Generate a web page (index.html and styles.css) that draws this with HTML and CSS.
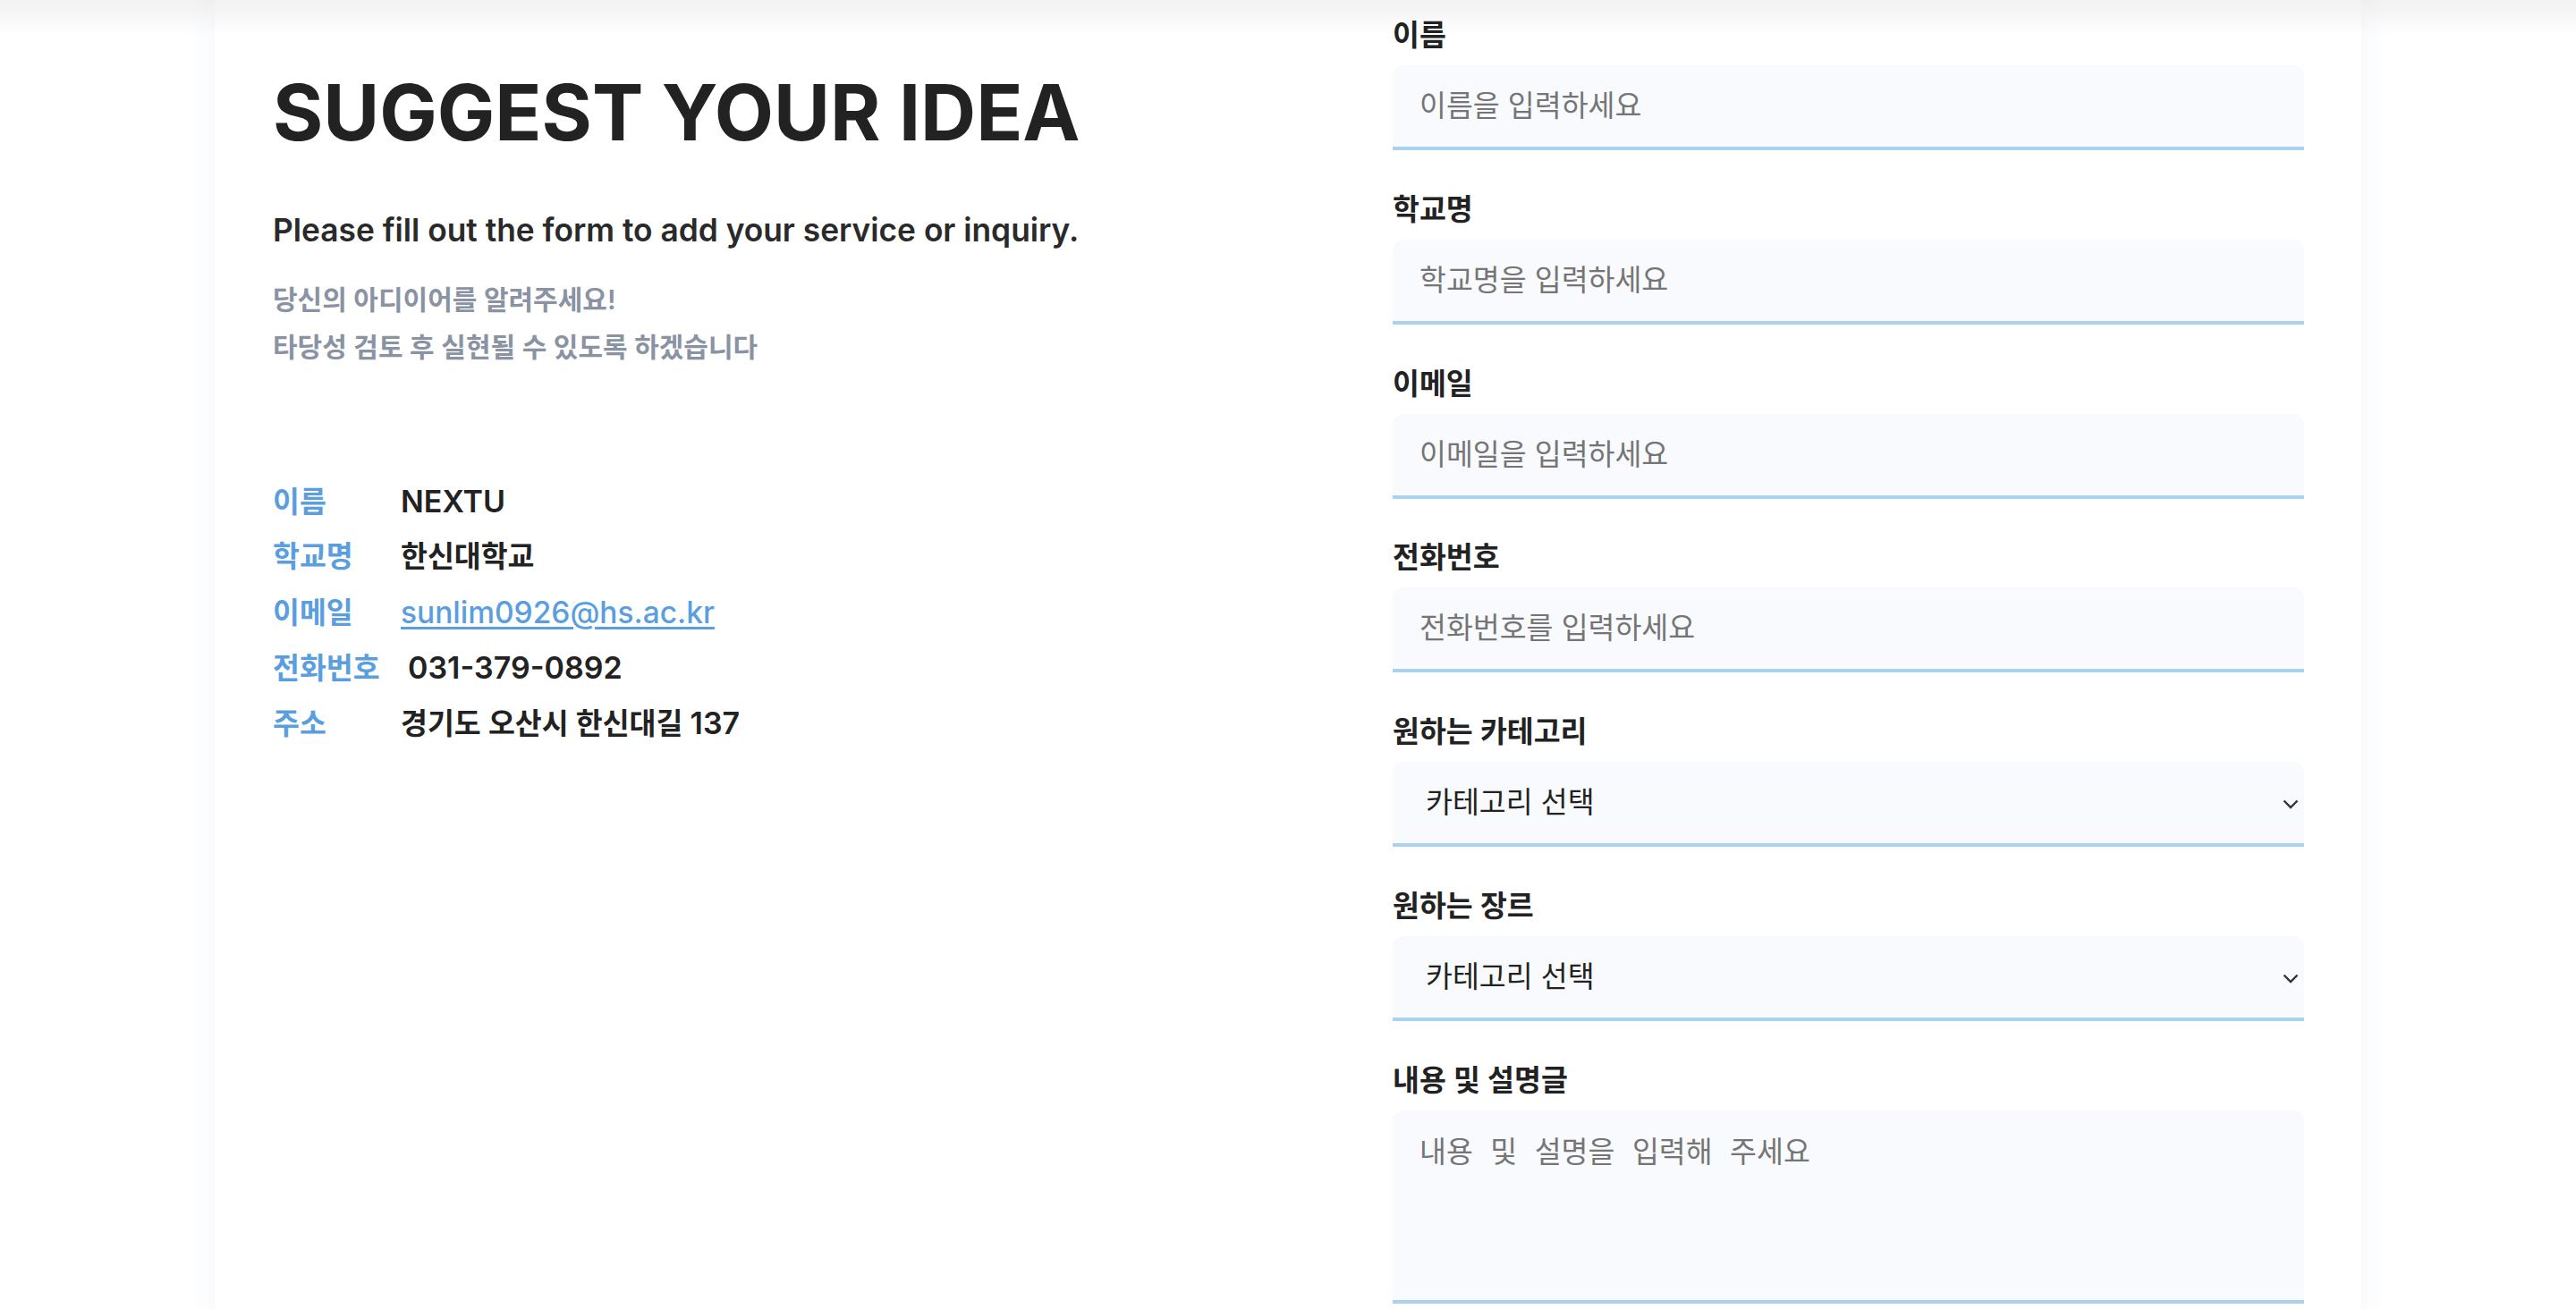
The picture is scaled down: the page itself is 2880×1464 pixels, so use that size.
FILE: index.html
```html
<!DOCTYPE html>
<html lang="ko">
<head>
<meta charset="utf-8">
<title>Suggest your idea</title>
<link rel="stylesheet" href="styles.css">
</head>
<body>
<div class="top-shade"></div>
<main class="card">
  <section class="intro">
    <h1 class="title">SUGGEST YOUR IDEA</h1>
    <p class="lead">Please fill out the form to add your service or inquiry.</p>
    <p class="desc">당신의 아디이어를 알려주세요!<br>타당성 검토 후 실현될 수 있도록 하겠습니다</p>
    <dl class="info">
      <div class="info-row"><dt class="info-label">이름</dt><dd class="info-value latin">NEXTU</dd></div>
      <div class="info-row"><dt class="info-label">학교명</dt><dd class="info-value">한신대학교</dd></div>
      <div class="info-row"><dt class="info-label">이메일</dt><dd class="info-value latin"><a class="mail" href="#">sunlim0926@hs.ac.kr</a></dd></div>
      <div class="info-row"><dt class="info-label">전화번호</dt><dd class="info-value latin phone">031-379-0892</dd></div>
      <div class="info-row"><dt class="info-label">주소</dt><dd class="info-value">경기도 오산시 한신대길 <span class="num">137</span></dd></div>
    </dl>
  </section>
  <form class="form">
    <div class="group">
      <label class="label">이름</label>
      <input class="field" type="text" placeholder="이름을 입력하세요">
    </div>
    <div class="group">
      <label class="label">학교명</label>
      <input class="field" type="text" placeholder="학교명을 입력하세요">
    </div>
    <div class="group">
      <label class="label">이메일</label>
      <input class="field" type="text" placeholder="이메일을 입력하세요">
    </div>
    <div class="group">
      <label class="label">전화번호</label>
      <input class="field" type="text" placeholder="전화번호를 입력하세요">
    </div>
    <div class="group">
      <label class="label">원하는 카테고리</label>
      <div class="select-wrap">
        <select class="field select"><option>카테고리 선택</option></select>
        <svg class="chev" width="18" height="11" viewBox="0 0 18 11"><path d="M1.5 1.5 L9 9 L16.5 1.5" fill="none" stroke="#333" stroke-width="2.4"/></svg>
      </div>
    </div>
    <div class="group">
      <label class="label">원하는 장르</label>
      <div class="select-wrap">
        <select class="field select"><option>카테고리 선택</option></select>
        <svg class="chev" width="18" height="11" viewBox="0 0 18 11"><path d="M1.5 1.5 L9 9 L16.5 1.5" fill="none" stroke="#333" stroke-width="2.4"/></svg>
      </div>
    </div>
    <div class="group">
      <label class="label">내용 및 설명글</label>
      <textarea class="field area" placeholder="내용 및 설명을 입력해 주세요"></textarea>
    </div>
  </form>
</main>
</body>
</html>
```
FILE: styles.css
```css
html, body {
  margin: 0;
  padding: 0;
  background: #ffffff;
}
body {
  font-family: Inter, "Noto Sans CJK KR", sans-serif;
  color: #222222;
}
.top-shade {
  position: fixed;
  top: 0;
  left: 0;
  right: 0;
  height: 40px;
  background: linear-gradient(to bottom, rgba(0, 0, 0, 0.055), rgba(0, 0, 0, 0));
  pointer-events: none;
  z-index: 5;
}
.card {
  width: 2400px;
  box-sizing: border-box;
  margin: 0 auto;
  padding: 17px 64px 80px 65px;
  background: #ffffff;
  box-shadow: 0 0 34px rgba(40, 70, 130, 0.05);
  display: grid;
  grid-template-columns: 1fr 1019px;
  min-height: 1600px;
}
.intro {
  padding-top: 57px;
}
.title {
  margin: 0;
  font-size: 86px;
  font-weight: 700;
  line-height: normal;
  color: #222222;
}
.lead {
  margin: 58px 0 0;
  font-size: 35.3px;
  font-weight: 600;
  line-height: normal;
  color: #2a2a2a;
}
.desc {
  margin: 30px 0 0;
  font-size: 30px;
  font-weight: 600;
  line-height: 53px;
  color: #8a93a3;
}
.info {
  margin: 115px 0 0;
  padding: 0;
}
.info-row {
  display: flex;
  align-items: baseline;
  height: 62px;
  line-height: 62px;
}
.info-label {
  width: 143px;
  flex-shrink: 0;
  font-size: 32.5px;
  font-weight: 600;
  color: #5a9ee0;
  white-space: nowrap;
}
.info-value {
  margin: 0;
  font-size: 32.5px;
  font-weight: 600;
  color: #222222;
  white-space: nowrap;
}
.info-value.latin {
  font-size: 34px;
}
.info-value .num {
  font-size: 34px;
}
.phone {
  padding-left: 8px;
}
.mail {
  color: #5a9ee0;
  text-decoration: underline;
  text-underline-offset: 4px;
  font-weight: 500;
  font-size: 33.5px;
}
.form {
  display: flex;
  flex-direction: column;
}
.group {
  display: flex;
  flex-direction: column;
  margin-bottom: 43.8px;
}
.label {
  font-size: 32.5px;
  font-weight: 600;
  line-height: 45px;
  margin-bottom: 11px;
  color: #222222;
}
.field {
  width: 100%;
  height: 95px;
  box-sizing: border-box;
  padding: 0 30px;
  margin: 0;
  border: none;
  border-bottom: 4px solid #aad2ef;
  border-radius: 12px 12px 0 0;
  background: #f8fafd;
  font-family: Inter, "Noto Sans CJK KR", sans-serif;
  font-size: 32.5px;
  font-weight: 400;
  color: #222222;
  outline: none;
}
.field::placeholder {
  color: #757575;
}
.select-wrap {
  position: relative;
}
.select {
  appearance: none;
  -webkit-appearance: none;
  padding-left: 37px;
  display: block;
}
.chev {
  position: absolute;
  right: 6px;
  top: 42px;
}
.area {
  height: 216px;
  padding: 27px 30px;
  resize: none;
  font-family: "Liberation Mono", "Noto Sans CJK KR", monospace;
  line-height: 1.4;
  display: block;
}
```
